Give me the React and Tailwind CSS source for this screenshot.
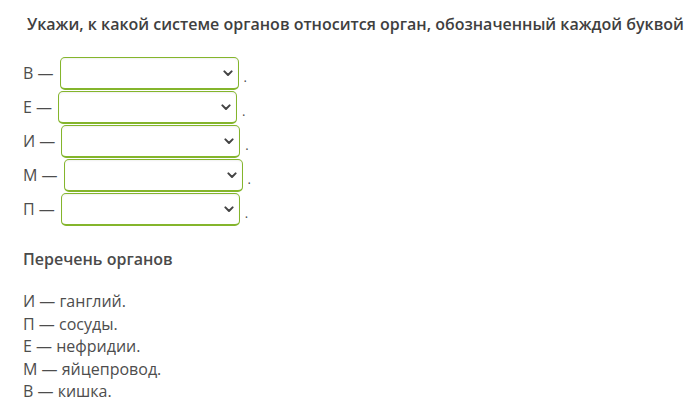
import React, { useState } from "react";

const rows = ["В", "Е", "И", "М", "П"];

const organs = [
    "И — ганглий.",
    "П — сосуды.",
    "Е — нефридии.",
    "М — яйцепровод.",
    "В — кишка.",
];

const Chevron = () => (
    <svg width="10" height="7" viewBox="0 0 10 7" className="text-[#444]">
        <path d="M1.4 1.4 L5 5 L8.6 1.4" fill="none" stroke="currentColor" strokeWidth="2" strokeLinecap="round" strokeLinejoin="round" />
    </svg>
);

const SelectRow = ({ letter }) => {
    const [value, setValue] = useState("");
    return (
        <div className="flex items-center h-[34px]">
            <span className="mr-[6px]">{letter} —</span>
            <div className="relative w-[179px] h-[33px] rounded-[5px] border border-[#84b52c] border-b-2 bg-white shadow-[inset_0_1px_2px_rgba(0,0,0,0.06)]">
                <select
                    value={value}
                    onChange={(e) => setValue(e.target.value)}
                    className="appearance-none w-full h-full bg-transparent px-2 outline-none"
                >
                    <option value=""></option>
                </select>
                <span className="absolute right-[5px] top-[12px] pointer-events-none">
                    <Chevron />
                </span>
            </div>
            <span className="ml-[5px] mt-[10px] text-[13px]">.</span>
        </div>
    );
};

export default function App() {
    return (
        <div className="bg-white w-[684px] h-[413px] overflow-hidden text-[#4d4d4d] text-[16px]" style={{ fontFamily: '"Open Sans", sans-serif' }}>
            <h1 className="pl-[27px] pt-[12px] text-[16px] font-semibold text-[#3f3f3f] whitespace-nowrap">
                Укажи, к какой системе органов относится орган, обозначенный каждой буквой
            </h1>

            <div className="pl-[23px] mt-[20px] flex flex-col">
                {rows.map((r) => (
                    <SelectRow key={r} letter={r} />
                ))}
            </div>

            <div className="pl-[23px] mt-[21px]">
                <h2 className="font-semibold text-[16px] text-[#4a4a4a]">Перечень органов</h2>
                <div className="mt-[19px] leading-[22.5px]">
                    {organs.map((o) => (
                        <div key={o}>{o}</div>
                    ))}
                </div>
            </div>
        </div>
    );
}
